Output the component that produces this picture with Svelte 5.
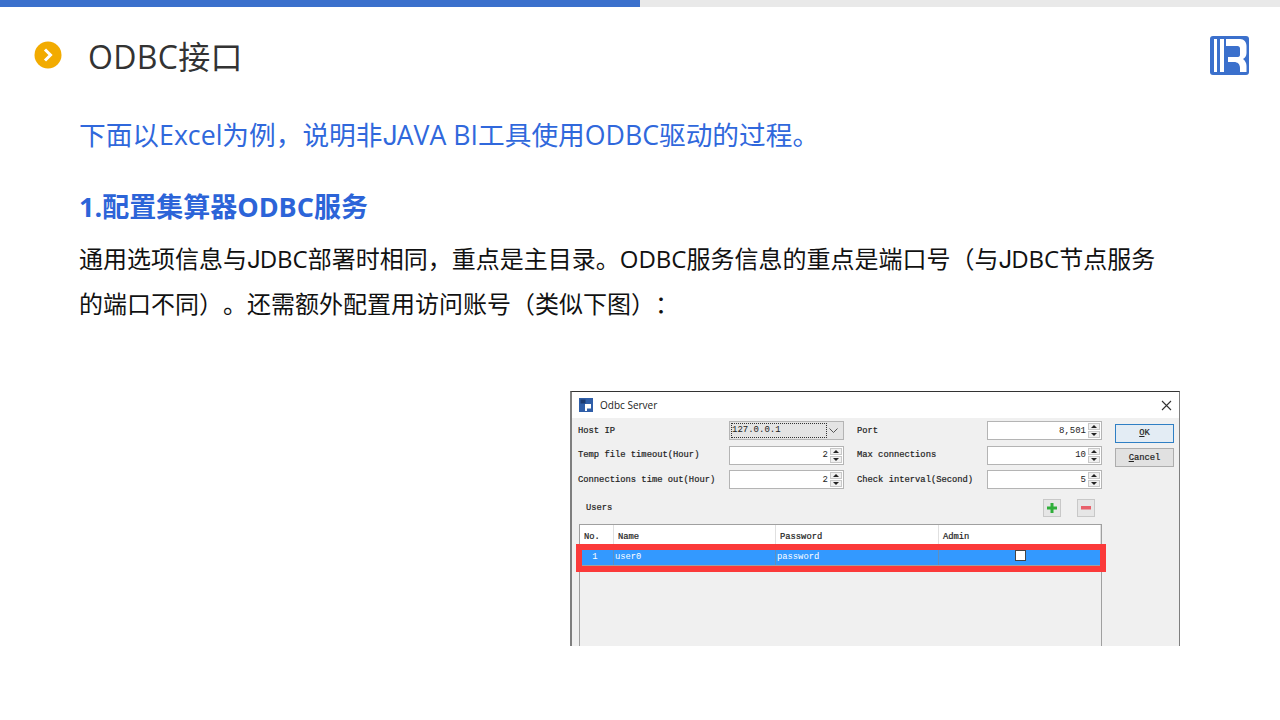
<script>
	const fields = [
		{ label: 'Host IP', combo: '127.0.0.1', label2: 'Port', value2: '8,501' },
		{ label: 'Temp file timeout(Hour)', value: '2', label2: 'Max connections', value2: '10' },
		{ label: 'Connections time out(Hour)', value: '2', label2: 'Check interval(Second)', value2: '5' }
	];
</script>

{#snippet spinner(value)}
	<div class="spin">
		<span class="spin-value">{value}</span>
		<div class="arrows">
			<span class="arrow"><i class="up"></i></span>
			<span class="arrow"><i class="down"></i></span>
		</div>
	</div>
{/snippet}

<div class="slide">
	<div class="progress"><div class="progress-fill"></div></div>

	<header class="header">
		<svg class="bullet" width="28" height="28" viewBox="0 0 28 28">
			<circle cx="14" cy="14" r="13.5" fill="#f2ab00" />
			<path d="M11 8.500l5.500 5.500-5.500 5.500" fill="none" stroke="#fff" stroke-width="3" />
		</svg>
		<h1>ODBC接口</h1>
		<svg class="logo" width="39" height="39" viewBox="0 0 39 39">
			<rect width="39" height="39" rx="3" fill="#3b70cc" />
			<path d="M4 3h3v33h-3zM10 3h4v33h-4z" fill="#fff" />
			<path
				d="M16 3h14c4 0 6.500 3 6.500 7v7c0 3-1.500 5-3.500 6 2 1.500 3.500 4 3.500 7v6h-6.500v-4c0-4-2.500-6-6-6h-6v-5h10c1.500 0 2-1 2-2.500v-6c0-1.500-1-2.500-2.500-2.500h-11.500z"
				fill="#fff"
			/>
		</svg>
	</header>

	<main class="content">
		<p class="intro">下面以Excel为例，说明非<span class="j">J</span>AVA BI工具使用ODBC驱动的过程。</p>
		<h2>1.配置集算器ODBC服务</h2>
		<p class="text">
			通用选项信息与<span class="j">J</span>DBC部署时相同，重点是主目录。ODBC服务信息的重点是端口号（与<span class="j">J</span>DBC节点服务<br />的端口不同）。还需额外配置用访问账号（类似下图）：
		</p>

		<div class="dialog">
			<div class="titlebar">
				<svg width="14" height="14" viewBox="0 0 14 14">
					<rect width="14" height="14" fill="#2f5ea8" />
					<rect x="1.500" y="1.500" width="5" height="4" fill="#1b3a70" />
					<path d="M6 6h6v4.500h-4v2.500h-2z" fill="#fff" />
				</svg>
				<span class="dialog-title">Odbc Server</span>
				<svg class="close" width="11" height="11" viewBox="0 0 11 11">
					<path d="M1 1l9 9M10 1l-9 9" stroke="#333" stroke-width="1.100" fill="none" />
				</svg>
			</div>

			<div class="dialog-body">
				<div class="form">
					{#each fields as f, i}
						<span class="label">{f.label}</span>
						{#if f.combo}
							<div class="combo">
								<span class="combo-value">{f.combo}</span>
								<svg width="9" height="5" viewBox="0 0 9 5">
									<path d="M.5.500l4 4 4-4" fill="none" stroke="#555" />
								</svg>
							</div>
						{:else}
							{@render spinner(f.value)}
						{/if}
						<span class="label label2">{f.label2}</span>
						{@render spinner(f.value2)}
						{#if i === 0}
							<button class="btn btn-ok"><u>O</u>K</button>
						{:else if i === 1}
							<button class="btn"><u>C</u>ancel</button>
						{:else}
							<span></span>
						{/if}
					{/each}
				</div>

				<div class="users-bar">
					<span class="label users">Users</span>
					<span class="icon-btn">
						<svg width="10" height="10" viewBox="0 0 10 10">
							<path d="M3.500 0h3v3.500h3.500v3h-3.500v3.500h-3v-3.500h-3.500v-3h3.500z" fill="#2fae3a" />
						</svg>
					</span>
					<span class="icon-btn">
						<svg width="10" height="4" viewBox="0 0 10 4">
							<rect width="10" height="3.500" fill="#e8606a" />
						</svg>
					</span>
				</div>

				<div class="table">
					<div class="row head">
						<span class="cell no">No.</span>
						<span class="cell name">Name</span>
						<span class="cell pass">Password</span>
						<span class="cell admin">Admin</span>
					</div>
					<div class="row selected">
						<span class="cell no num">1</span>
						<span class="cell name">user0</span>
						<span class="cell pass">password</span>
						<span class="cell admin"><i class="check"></i></span>
					</div>
				</div>
			</div>
		</div>
	</main>
</div>

<style>
	:global(body) {
		margin: 0;
		background: #fff;
	}

	.slide {
		width: 1280px;
		height: 720px;
		overflow: hidden;
		background: #fff;
		font-family: 'Open Sans', 'Noto Sans CJK SC', sans-serif;
		text-spacing-trim: space-all;
	}

	.progress {
		height: 7px;
		background: #e9e9e9;
	}

	.progress-fill {
		width: 640px;
		height: 100%;
		background: #3b70cc;
	}

	.header {
		display: flex;
		align-items: center;
		height: 80px;
		padding: 8px 31px 0 34px;
	}

	.bullet {
		flex: none;
	}

	h1 {
		flex: 1;
		margin: 0 0 0 26px;
		font-size: 32px;
		font-weight: 400;
		letter-spacing: 0.3px;
		color: #333;
	}

	.logo {
		flex: none;
		margin-top: 1px;
	}

	.content {
		padding: 18px 100px 0 79px;
	}

	.j {
		font-family: Inter, sans-serif;
		line-height: 1;
		letter-spacing: -1px;
	}

	.intro {
		margin: 0;
		font-size: 26.700px;
		line-height: 44px;
		color: #3068dc;
	}

	h2 {
		margin: 28px 0 0;
		font-size: 27px;
		line-height: 44px;
		font-weight: 700;
		color: #2c64d8;
	}

	.text {
		margin: 7px 0 0;
		font-size: 24px;
		line-height: 45px;
		color: #111;
	}

	.dialog {
		width: 610px;
		height: 255px;
		margin: 65px 0 0 auto;
		box-sizing: border-box;
		overflow: hidden;
		border-top: 1px solid #333;
		border-left: 2px solid #7f7f7f;
		border-right: 1px solid #7f7f7f;
		background: #f0f0f0;
		font-family: 'Liberation Mono', monospace;
		font-size: 8.800px;
		color: #222;
	}

	.titlebar {
		display: flex;
		align-items: center;
		gap: 7px;
		height: 26px;
		padding: 0 7px;
		background: #fff;
	}

	.dialog-title {
		flex: 1;
		font-family: 'Open Sans', sans-serif;
		font-size: 10px;
		color: #222;
	}

	.dialog-body {
		padding: 3px 0 0 6px;
	}

	.form {
		display: grid;
		grid-template-columns: 151px 115px 143px 115px 72px;
		grid-auto-rows: 19px;
		row-gap: 5.500px;
		align-items: center;
	}

	.label {
		white-space: nowrap;
		color: #222;
		-webkit-text-stroke: 0.2px #222;
	}

	.label2 {
		padding-left: 13px;
	}

	.spin,
	.combo {
		display: flex;
		align-items: center;
		box-sizing: border-box;
		height: 19px;
		border: 1px solid #b4b4b4;
		background: #fff;
	}

	.combo {
		justify-content: space-between;
		padding: 0 5px 0 2px;
		background: #e4e4e4;
	}

	.combo-value {
		outline: 1px dotted #333;
		width: 94px;
		font-size: 9px;
		line-height: 13px;
	}

	.spin-value {
		flex: 1;
		padding-right: 2px;
		text-align: right;
		font-size: 9px;
	}

	.arrows {
		display: flex;
		flex-direction: column;
		gap: 1px;
		width: 13px;
		height: 100%;
		padding: 1px 1px 1px 0;
		box-sizing: border-box;
	}

	.arrow {
		flex: 1;
		display: flex;
		align-items: center;
		justify-content: center;
		background: #f0f0f0;
		border: 1px solid #c8c8c8;
	}

	.up,
	.down {
		width: 0;
		height: 0;
		border-left: 3px solid transparent;
		border-right: 3px solid transparent;
	}

	.up {
		border-bottom: 3px solid #222;
	}

	.down {
		border-top: 3px solid #222;
	}

	.btn {
		justify-self: end;
		width: 59px;
		height: 19px;
		margin: 5px 0 0;
		padding: 0;
		box-sizing: border-box;
		border: 1px solid #adadad;
		background: #e1e1e1;
		font: 8.800px 'Liberation Mono', monospace;
		-webkit-text-stroke: 0.2px #222;
		color: #222;
	}

	.btn-ok {
		border: 1px solid #2f7fc4;
		background: #e3ecf4;
	}

	.users-bar {
		display: flex;
		align-items: center;
		height: 18px;
		margin-top: 10px;
		padding-right: 84px;
	}

	.users {
		flex: 1;
		padding-left: 8px;
	}

	.icon-btn {
		display: flex;
		align-items: center;
		justify-content: center;
		width: 18px;
		height: 18px;
		box-sizing: border-box;
		margin-left: 16px;
		border: 1px solid #c8c8c8;
		background: #e6e6e6;
	}

	.table {
		width: 523px;
		height: 200px;
		margin: 7px 0 0 1px;
		box-sizing: border-box;
		border: 1px solid #a0a0a0;
	}

	.row {
		display: flex;
	}

	.head {
		height: 20px;
		background: #fff;
		color: #222;
		-webkit-text-stroke: 0.2px #222;
	}

	.head .cell {
		padding-top: 7px;
		border-right: 1px solid #e0e0e0;
	}

	.cell {
		display: block;
		box-sizing: border-box;
		padding-left: 4px;
	}

	.no {
		width: 34px;
	}

	.name {
		width: 162px;
	}

	.pass {
		width: 163px;
	}

	.admin {
		flex: 1;
	}

	.selected {
		position: relative;
		height: 16px;
		margin: 5px 1px 0 2px;
		background: #3399ff;
		color: #fff;
		line-height: 14px;
		border-bottom: 1px solid #a0a0a0;
		box-sizing: border-box;
		outline: 6px solid #fb3a3a;
	}

	.selected .cell {
		padding-left: 1px;
		border-right: 1px solid #5f8fbf;
	}

	.selected .no {
		width: 32px;
		padding-right: 6px;
	}

	.num {
		text-align: center;
	}

	.selected .admin {
		display: flex;
		justify-content: center;
		border: 0;
	}

	.check {
		width: 11px;
		height: 11px;
		box-sizing: border-box;
		background: #fff;
		border: 1px solid #444;
	}
</style>
